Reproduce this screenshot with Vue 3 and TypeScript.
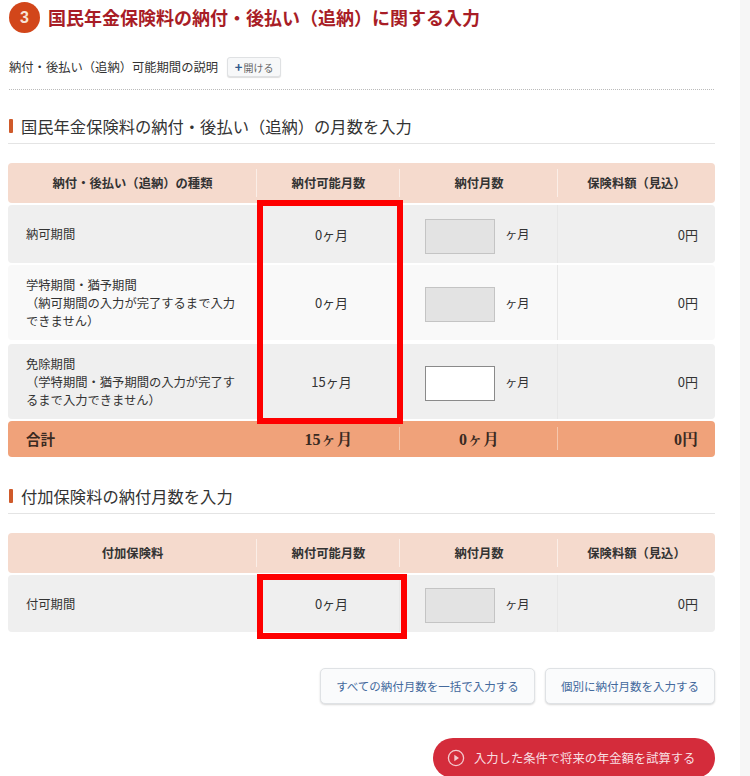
<script setup lang="ts">
interface Row {
  lines: string[]
  possible: string
  enabled: boolean
  height: number
}

const L = '\uFF08'
const R = '\uFF09'

const mainRows: Row[] = [
  { lines: ['納可期間'], possible: '0ヶ月', enabled: false, height: 58 },
  {
    lines: ['学特期間・猶予期間', `${L}納可期間の入力が完了するまで入力`, `できません${R}`],
    possible: '0ヶ月',
    enabled: false,
    height: 75,
  },
  {
    lines: ['免除期間', `${L}学特期間・猶予期間の入力が完了す`, `るまで入力できません${R}`],
    possible: '15ヶ月',
    enabled: true,
    height: 75,
  },
]

const addonRows: Row[] = [
  { lines: ['付可期間'], possible: '0ヶ月', enabled: false, height: 57 },
]

const pageTitle = `国民年金保険料の納付・後払い${L}追納${R}に関する入力`
const descText = `納付・後払い${L}追納${R}可能期間の説明`
const feeHead = `保険料額${L}見込${R}`

const sections = [
  {
    heading: `国民年金保険料の納付・後払い${L}追納${R}の月数を入力`,
    first: `納付・後払い${L}追納${R}の種類`,
    rows: mainRows,
    total: true,
    cls: 'sec-main',
  },
  {
    heading: '付加保険料の納付月数を入力',
    first: '付加保険料',
    rows: addonRows,
    total: false,
    cls: 'sec-addon',
  },
]
</script>

<template>
  <div class="page">
    <main class="content">
      <header class="title">
        <span class="badge">3</span>
        <h1>{{ pageTitle }}</h1>
      </header>

      <div class="desc">
        <span>{{ descText }}</span>
        <button class="open" type="button"><b>+</b>開ける</button>
      </div>

      <section v-for="s in sections" :key="s.cls" :class="['section', s.cls]">
        <h2><i class="mark"></i>{{ s.heading }}</h2>
        <div class="table">
          <div class="row head">
            <div class="cell c">{{ s.first }}</div>
            <div class="cell c">納付可能月数</div>
            <div class="cell c">納付月数</div>
            <div class="cell c">{{ feeHead }}</div>
          </div>
          <div
            v-for="(r, i) in s.rows"
            :key="i"
            :class="['row', 'body', i % 2 ? 'alt' : '']"
            :style="{ height: r.height + 'px' }"
          >
            <div class="cell name">
              <div v-for="l in r.lines" :key="l">{{ l }}</div>
            </div>
            <div class="cell c count">{{ r.possible }}</div>
            <div class="cell months">
              <input :class="['num', r.enabled ? '' : 'off']" :disabled="!r.enabled" />
              <span>ヶ月</span>
            </div>
            <div class="cell r">0円</div>
          </div>
          <div v-if="s.total" class="row total">
            <div class="cell name">合計</div>
            <div class="cell c">15ヶ月</div>
            <div class="cell c">0ヶ月</div>
            <div class="cell r">0円</div>
          </div>
          <div class="hl"></div>
        </div>
      </section>

      <div class="actions">
        <button class="ghost wide" type="button">すべての納付月数を一括で入力する</button>
        <button class="ghost" type="button">個別に納付月数を入力する</button>
      </div>

      <div class="submit-wrap">
        <button class="submit" type="button">
          <svg width="18" height="18" viewBox="0 0 18 18" aria-hidden="true">
            <circle cx="9" cy="9" r="7.6" fill="none" stroke="#f3c9ce" stroke-width="1.3" />
            <path d="M7.3 5.8 12 9l-4.7 3.2z" fill="#f3c9ce" />
          </svg>
          <span>入力した条件で将来の年金額を試算する</span>
        </button>
      </div>
    </main>
    <aside class="band"></aside>
  </div>
</template>

<style scoped>
.page {
  display: flex;
  width: 750px;
  height: 776px;
  overflow: hidden;
  background: #fff;
  color: #333;
  font-family: "Noto Sans CJK JP", "Noto Sans", sans-serif;
  font-size: 12.3px;
}
.content {
  width: 740px;
  padding-left: 8px;
  box-sizing: border-box;
  flex: none;
}
.band {
  flex: 1;
  background: #f6f6f6;
}
.title {
  display: flex;
  align-items: center;
  gap: 8px;
  height: 31px;
  margin: 2px 0 0 1px;
}
.badge {
  width: 31px;
  height: 31px;
  border-radius: 50%;
  background: #d2461a;
  color: #f7e3d6;
  font: 700 16px/31px "Liberation Sans", sans-serif;
  text-align: center;
}
h1 {
  margin: 0;
  font-size: 18px;
  line-height: 31px;
  font-weight: 700;
  color: #a81d26;
  white-space: nowrap;
}
.desc {
  display: flex;
  align-items: center;
  gap: 9px;
  width: 705px;
  margin: 24px 0 0 1px;
  padding-bottom: 12px;
  border-bottom: 1px dotted #bbb;
  white-space: nowrap;
}
.open {
  width: 54px;
  height: 20px;
  padding: 0;
  border: 1px solid #dfe1e3;
  border-radius: 3px;
  background: #f7f8f9;
  box-shadow: 0 1px 1px #ddd;
  color: #666;
  font: 10px/18px "Noto Sans CJK JP", sans-serif;
}
.open b {
  color: #2f5a8c;
  font-size: 13px;
  line-height: 18px;
  margin-right: 1px;
}
.section {
  width: 707px;
}
.sec-main {
  margin-top: 26px;
}
.sec-addon {
  margin-top: 29px;
}
h2 {
  display: flex;
  align-items: center;
  height: 20px;
  margin: 0;
  padding: 0 0 7px 1px;
  border-bottom: 1px solid #e4e4e4;
  font-size: 16.3px;
  line-height: 20px;
  font-weight: 400;
  color: #333;
  white-space: nowrap;
}
.mark {
  width: 4px;
  height: 14px;
  margin-right: 8px;
  border-radius: 1px;
  background: #cf5a2a;
}
.table {
  position: relative;
  display: flex;
  flex-direction: column;
  gap: 2px;
  margin-top: 19px;
}
.row {
  display: grid;
  grid-template-columns: 249px 143px 158px 157px;
  border-radius: 4px;
  align-items: stretch;
}
.cell {
  display: flex;
  align-items: center;
  min-width: 0;
}
.cell + .cell {
  box-shadow: -1px 0 0 #e7e7e7;
}
.body .cell:nth-child(2) {
  box-shadow: none;
}
.c {
  justify-content: center;
}
.count {
  padding-left: 6px;
  font-size: 13px;
}
.r {
  justify-content: flex-end;
  padding-right: 17px;
  font-size: 13px;
}
.head {
  height: 40px;
  background: #f5dacd;
  font-weight: 700;
}
.head .cell + .cell {
  box-shadow: -1px 0 0 #fbeee7;
}
.head .cell {
  margin: 6px 0;
}
.body {
  background: #efefef;
}
.body.alt {
  background: #f9f9f9;
  margin-bottom: 2px;
}
.name {
  display: block;
  align-self: center;
  padding-left: 18px;
  line-height: 18px;
}
.months {
  gap: 10px;
  padding-left: 25px;
}
.num {
  width: 70px;
  height: 35px;
  margin-top: 4px;
  box-sizing: border-box;
  border: 1px solid #8a8a8a;
  background: #fff;
  padding: 0;
}
.num.off {
  border-color: #c4c4c4;
  background: #e3e3e3;
}
.total {
  height: 36px;
  background: #f0a27a;
  font-family: "Liberation Serif", "Noto Serif CJK JP", "Noto Sans CJK JP", serif;
  font-weight: 700;
  font-size: 16px;
  color: #3a2a22;
}
.total .cell {
  margin: 6px 0 10px;
}
.total .r {
  font-size: 16px;
}
.total .cell + .cell {
  box-shadow: -1px 0 0 #f6c7ad;
}
.total .cell:nth-child(2) {
  box-shadow: none;
}
.total .name {
  font-family: "Noto Sans CJK JP", sans-serif;
  font-size: 14.5px;
  align-self: center;
}
.hl {
  position: absolute;
  left: 249px;
  border: 6px solid #fe0000;
  box-sizing: border-box;
  pointer-events: none;
}
.sec-main .hl {
  top: 37px;
  width: 146px;
  height: 224px;
}
.sec-addon .hl {
  top: 41px;
  width: 150px;
  height: 65px;
}
.actions {
  display: flex;
  justify-content: flex-end;
  gap: 10px;
  width: 707px;
  margin-top: 36px;
}
.ghost {
  width: 170px;
  height: 36px;
  padding: 0;
  border: 1px solid #dfe2e5;
  border-radius: 5px;
  background: #fafbfc;
  box-shadow: 0 1px 2px #d8d8d8;
  color: #43699c;
  font: 11.5px/34px "Noto Sans CJK JP", sans-serif;
}
.ghost.wide {
  width: 215px;
}
.submit-wrap {
  display: flex;
  justify-content: flex-end;
  width: 707px;
  margin-top: 34px;
}
.submit {
  display: flex;
  align-items: center;
  gap: 9px;
  width: 282px;
  height: 40px;
  padding: 0 0 0 14px;
  border: 0;
  border-radius: 20px;
  background: #d42c3b;
  color: #f8dfe1;
  font: 12.3px/40px "Noto Sans CJK JP", sans-serif;
  white-space: nowrap;
}
</style>

<style>
html,
body {
  margin: 0;
  overflow: hidden;
}
</style>
